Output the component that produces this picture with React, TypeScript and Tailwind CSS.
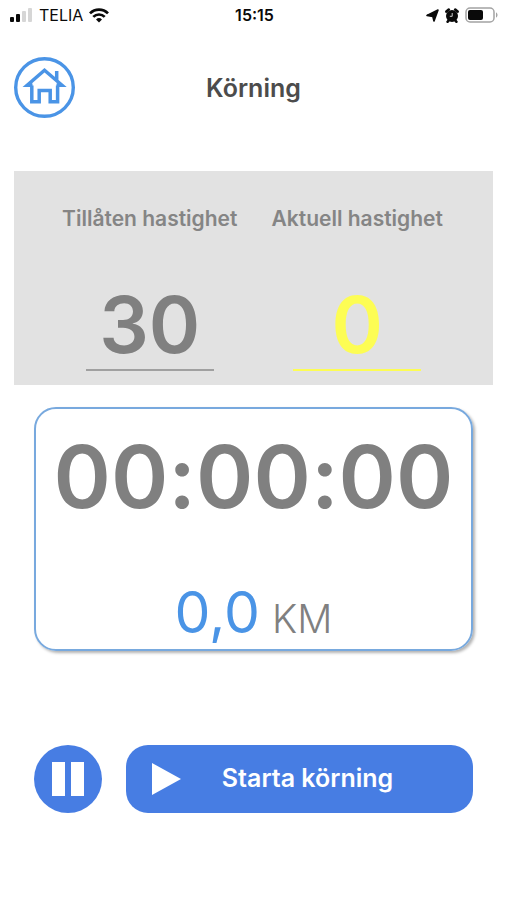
import type { ReactNode } from "react"

function SignalIcon () {
  return (
    <svg width="23" height="14" viewBox="0 0 23 14" aria-hidden="true">
      <rect x="0" y="9" width="4" height="5" rx="1" fill="#0a0a0a" />
      <rect x="6" y="6" width="4" height="8" rx="1" fill="#0a0a0a" />
      <rect x="12" y="3" width="4" height="11" rx="1" fill="#d6d6d6" />
      <rect x="18" y="0" width="4" height="14" rx="1" fill="#d6d6d6" />
    </svg>
  )
}

function WifiIcon () {
  return (
    <svg width="20" height="15" viewBox="0 0 20 15" aria-hidden="true">
      <g fill="none" stroke="#0a0a0a" strokeWidth="2.7">
        <path d="M1 5.4a12.7 12.7 0 0 1 18 0" />
        <path d="M4.3 8.9a8 8 0 0 1 11.4 0" />
      </g>
      <path d="M7 11.5a4.3 4.3 0 0 1 6 0L10 14.5z" fill="#0a0a0a" />
    </svg>
  )
}

function LocationIcon () {
  return (
    <svg width="13" height="13" viewBox="0 0 13 13" aria-hidden="true">
      <path d="M12 1 8 12 6.800 7.400 1 6.400z" fill="#0a0a0a" stroke="#0a0a0a" strokeWidth="1.600" strokeLinejoin="round" />
    </svg>
  )
}

function AlarmIcon () {
  return (
    <svg width="14" height="15" viewBox="0 0 14 15" aria-hidden="true">
      <circle cx="7" cy="8" r="6" fill="#0a0a0a" />
      <path d="M1.4 3.6 3.8 1.6M12.6 3.6 10.2 1.6M2.6 13.8l1.6-2M11.4 13.8l-1.6-2" stroke="#0a0a0a" strokeWidth="2.6" strokeLinecap="round" />
      <path d="M7.2 5v3.3H4.8" fill="none" stroke="#fff" strokeWidth="0.8" />
    </svg>
  )
}

function BatteryIcon () {
  return (
    <svg width="34" height="16" viewBox="0 0 34 16" aria-hidden="true">
      <rect x="1" y="1" width="28" height="14" rx="4" fill="#fff" stroke="#a3a3a3" strokeWidth="1.5" />
      <rect x="3" y="3" width="15" height="10" rx="2" fill="#0a0a0a" />
      <path d="M31 5.5c2 .6 2 4.4 0 5z" fill="#a3a3a3" />
    </svg>
  )
}

function HomeIcon () {
  return (
    <svg className="size-full" viewBox="0 0 61 61" fill="none" stroke="#4a94e6" aria-hidden="true">
      <circle cx="30.5" cy="30.5" r="28.8" strokeWidth="3.4" />
      <path
        d="M17.8 28.5V44.7h7.4V33.5h11V44.7h7.4V28.5M18.5 28.3H13.2L30.5 13.2 48 28.3H42.5M42.7 14v9.5"
        strokeWidth="3.5"
      />
    </svg>
  )
}

function StatusBar () {
  return (
    <div className="grid grid-cols-[1fr_auto_1fr] items-center pl-2.5 pr-2 pt-[5px] text-neutral-950">
      <div className="flex items-center gap-1.5">
        <SignalIcon />
        <span className="text-base leading-5">TELIA</span>
        <WifiIcon />
      </div>
      <span className="text-base leading-5 font-semibold">15:15</span>
      <div className="flex items-center justify-end gap-1.5">
        <LocationIcon />
        <AlarmIcon />
        <BatteryIcon />
      </div>
    </div>
  )
}

function Header () {
  return (
    <header className="grid grid-cols-[1fr_auto_1fr] items-center px-3.5 pt-8">
      <button type="button" aria-label="Hem" className="size-[61px] rounded-full">
        <HomeIcon />
      </button>
      <h1 className="text-[25px] leading-8 font-semibold text-[#4c4c4c]">Körning</h1>
    </header>
  )
}

function Speed (props: { label: string, tone: string, children: ReactNode }) {
  return (
    <div className="flex flex-1 flex-col items-center">
      <dt className="text-[21px] leading-7 font-semibold whitespace-nowrap text-[#858585]">
        {props.label}
      </dt>
      <dd className={`mt-12 w-32 border-b-2 text-center text-[78px] leading-[88px] font-semibold ${props.tone}`}>
        {props.children}
      </dd>
    </div>
  )
}

export default function App () {
  return (
    <div className="min-h-screen bg-white font-['Inter',sans-serif]">
      <StatusBar />
      <Header />

      <main>
        <dl className="mx-3.5 mt-[53px] flex bg-[#e2e2e2] px-8 pt-[34px] pb-3.5">
          <Speed label="Tillåten hastighet" tone="border-[#a0a0a0] text-[#808080]">30</Speed>
          <Speed label="Aktuell hastighet" tone="border-[#fdfd54] text-[#fdfd54]">0</Speed>
        </dl>

        <section className="mx-[34px] mt-[22px] flex flex-col items-center rounded-[22px] border-2 border-[#78a9de] pt-4 shadow-[2px_2px_3px_rgba(0,0,0,0.3)]">
          <p className="text-[87px] leading-[104px] font-semibold text-[#808080] [font-feature-settings:'calt'_0]">00:00:00</p>
          <p className="mt-[54px] flex items-baseline gap-3 leading-[60px]">
            <span className="text-[57px] text-[#4a94e6]">0,0</span>
            <span className="text-[39px] font-light text-[#808080]">KM</span>
          </p>
        </section>

        <div className="mx-[34px] mt-[94px] flex gap-6">
          <button
            type="button"
            aria-label="Pausa"
            className="flex size-[68px] shrink-0 items-center justify-center gap-1.5 rounded-full bg-[#477de3]"
          >
            <span className="h-[34px] w-[13px] bg-white" />
            <span className="h-[34px] w-[13px] bg-white" />
          </button>
          <button
            type="button"
            className="flex h-[68px] flex-1 items-center rounded-[22px] bg-[#477de3] pr-10 pl-6 text-[25px] font-semibold text-white"
          >
            <svg width="32" height="34" viewBox="0 0 32 34" aria-hidden="true">
              <path d="M2 1 31 17 2 33z" fill="#fff" />
            </svg>
            <span className="flex-1 text-center">Starta körning</span>
          </button>
        </div>
      </main>
    </div>
  )
}
